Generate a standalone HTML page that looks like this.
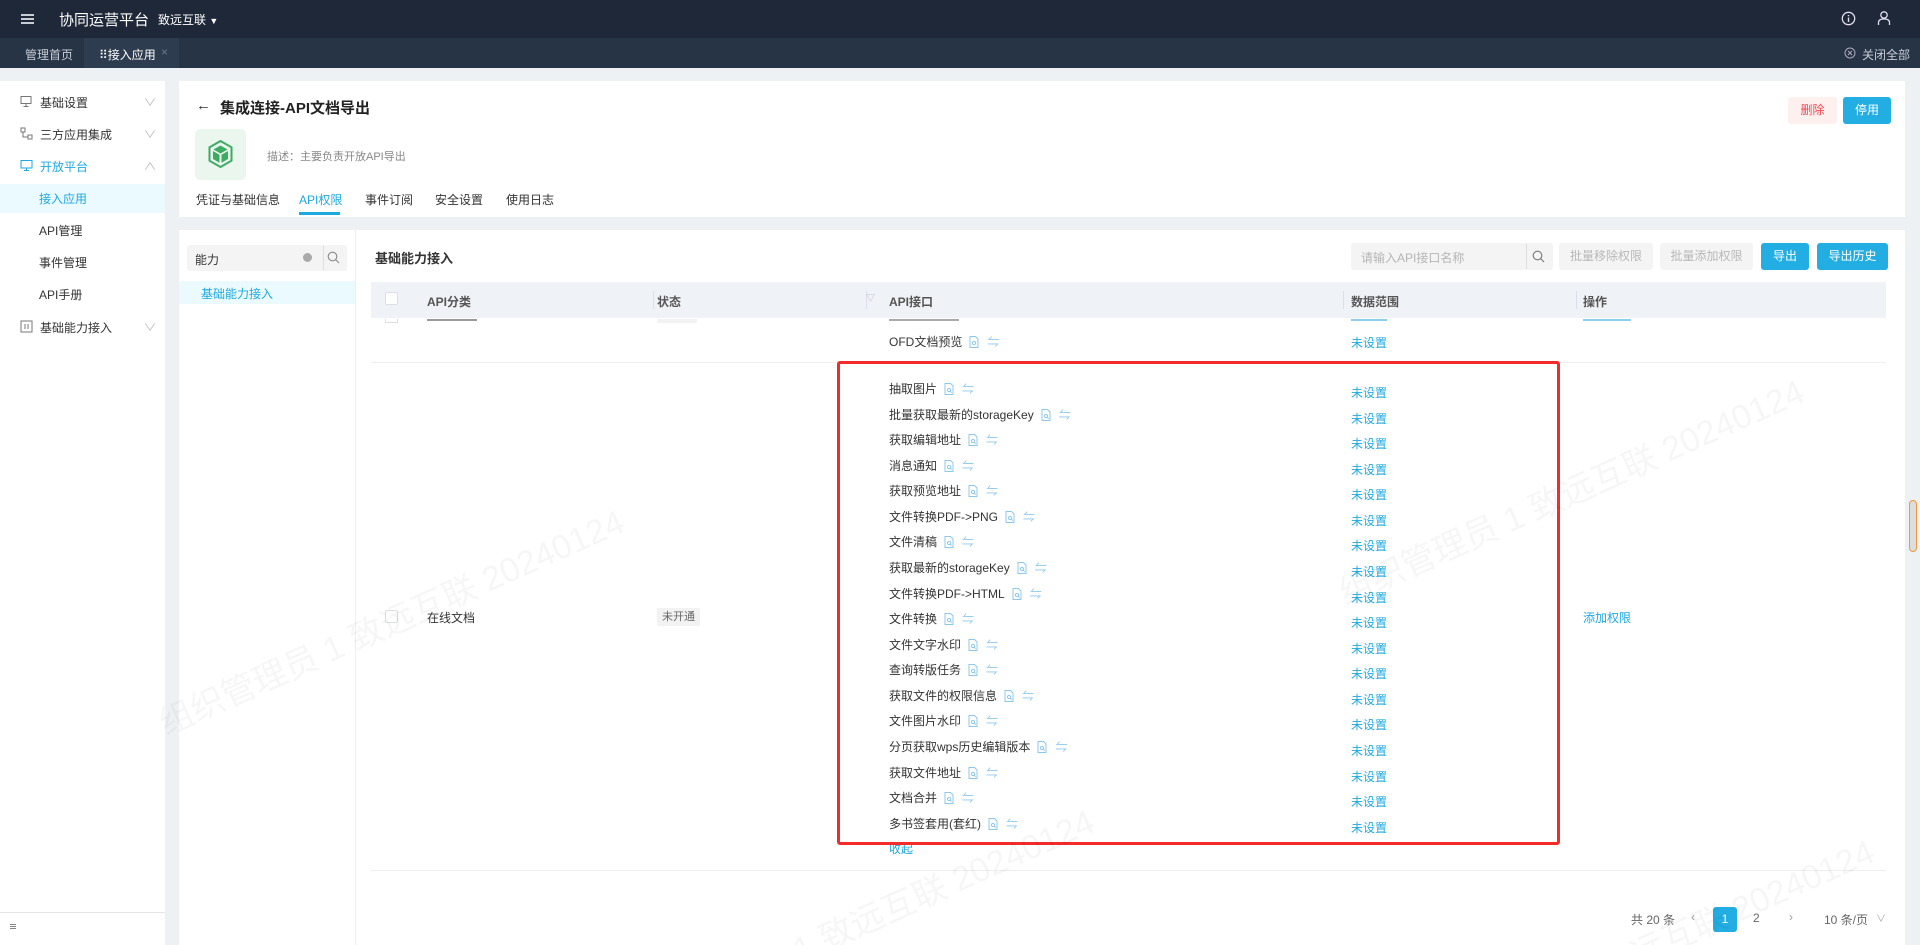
<!DOCTYPE html>
<html><head><meta charset="utf-8"><style>
*{box-sizing:border-box;margin:0;padding:0}
html,body{width:1920px;height:945px;overflow:hidden}
body{background:#eef1f4;font-family:"Liberation Sans","Noto Sans CJK SC",sans-serif;font-size:12px;color:#333;position:relative}
.a{position:absolute;white-space:nowrap}
.blue{color:#1ea9e1}
.btn{position:absolute;border-radius:3px;text-align:center;font-size:12px}
.it{position:absolute;left:889px;font-size:12px;color:#333}
.it svg{vertical-align:-2px;margin-left:7px}
.ns{position:absolute;left:1351px;color:#1ea9e1;font-size:12px}
.wmc{position:absolute;left:0;top:0;width:1920px;height:945px;overflow:hidden;pointer-events:none}
.wm{position:absolute;color:rgba(0,0,0,0.035);font-size:34px;transform:rotate(-24deg);transform-origin:left top;white-space:nowrap}
</style></head><body>
<div class="a" style="left:0;top:0;width:1920px;height:38px;background:#1e2838"></div>
<div class="a" style="left:21px;top:14px;width:13px;height:2px;background:#c8cdd4;box-shadow:0 4px 0 #c8cdd4,0 8px 0 #c8cdd4"></div>
<div class="a" style="left:59px;top:9px;color:#fff;font-size:15px">协同运营平台</div>
<div class="a" style="left:158px;top:11px;color:#fff;font-size:12px">致远互联 <span style="font-size:9px">▼</span></div>
<svg class="a" style="left:1841px;top:11px" width="15" height="15" viewBox="0 0 15 15"><circle cx="7.5" cy="7.5" r="6.2" fill="none" stroke="#dde" stroke-width="1.3"/><path d="M7.5 6.5v4.5M7.5 4v1.3" stroke="#dde" stroke-width="1.4"/></svg>
<svg class="a" style="left:1877px;top:10px" width="14" height="16" viewBox="0 0 14 16"><circle cx="7" cy="5" r="3.2" fill="none" stroke="#dde" stroke-width="1.3"/><path d="M1.5 15v-2.5q0-3.5 5.5-3.5t5.5 3.5V15" fill="none" stroke="#dde" stroke-width="1.3"/></svg>
<div class="a" style="left:0;top:38px;width:1920px;height:30px;background:#263445"></div>
<div class="a" style="left:84px;top:38px;width:95px;height:30px;background:#2e3c4f"></div>
<div class="a" style="left:25px;top:46px;color:#c9ced6;font-size:12px">管理首页</div>
<div class="a" style="left:99px;top:46px;color:#fff;font-size:12px">⠿接入应用</div>
<div class="a" style="left:161px;top:45px;color:#6c7888;font-size:12px">×</div>
<svg class="a" style="left:1844px;top:47px" width="12" height="12" viewBox="0 0 12 12"><circle cx="6" cy="6" r="5" fill="none" stroke="#aab" stroke-width="1"/><path d="M4 4l4 4M8 4l-4 4" stroke="#aab"/></svg>
<div class="a" style="left:1862px;top:46px;color:#c9ced6;font-size:12px">关闭全部</div>
<div class="a" style="left:0;top:81px;width:165px;height:864px;background:#fff"></div>
<div class="a" style="left:0;top:184px;width:165px;height:29px;background:#eafafe"></div>
<svg class="a" style="left:20px;top:95px" width="13" height="13" viewBox="0 0 13 13"><rect x="1" y="1.5" width="10" height="7" fill="none" stroke="#777"/><path d="M6 8.5v3M3.5 11.5h5" stroke="#777"/></svg>
<div class="a" style="left:40px;top:94px;font-size:12px">基础设置</div>
<svg class="a" style="left:20px;top:127px" width="13" height="13" viewBox="0 0 13 13"><rect x="1" y="1" width="4" height="4" fill="none" stroke="#777"/><rect x="8" y="8" width="4" height="4" fill="none" stroke="#777"/><path d="M3 5v5h5" fill="none" stroke="#777"/></svg>
<div class="a" style="left:40px;top:126px;font-size:12px">三方应用集成</div>
<svg class="a" style="left:20px;top:159px" width="13" height="13" viewBox="0 0 13 13"><rect x="1" y="1.5" width="11" height="7.5" fill="none" stroke="#1ea9e1"/><path d="M6.5 9v2.5M4 11.5h5" stroke="#1ea9e1"/></svg>
<div class="a blue" style="left:40px;top:158px;font-size:12px">开放平台</div>
<div class="a blue" style="left:39px;top:190px">接入应用</div>
<div class="a" style="left:39px;top:222px">API管理</div>
<div class="a" style="left:39px;top:254px">事件管理</div>
<div class="a" style="left:39px;top:286px">API手册</div>
<svg class="a" style="left:20px;top:320px" width="13" height="13" viewBox="0 0 13 13"><rect x="1" y="1" width="11" height="11" fill="none" stroke="#777"/><path d="M5 4v5M8 4v5" stroke="#777"/></svg>
<div class="a" style="left:40px;top:319px;font-size:12px">基础能力接入</div>
<div class="a" style="left:145px;top:94px;color:#bbb;font-size:10px;transform:scaleX(1.3)">∨</div>
<div class="a" style="left:145px;top:126px;color:#bbb;font-size:10px;transform:scaleX(1.3)">∨</div>
<div class="a" style="left:145px;top:158px;color:#bbb;font-size:10px;transform:scaleX(1.3)">∧</div>
<div class="a" style="left:145px;top:319px;color:#bbb;font-size:10px;transform:scaleX(1.3)">∨</div>
<div class="a" style="left:0;top:912px;width:165px;height:1px;background:#e4e6ea"></div>
<div class="a" style="left:10px;top:924px;width:6px;height:1px;background:#888;box-shadow:0 2px 0 #888,0 4px 0 #888"></div>
<div class="a" style="left:179px;top:81px;width:1726px;height:136px;background:#fff"></div>
<div class="a" style="left:196px;top:97px;font-size:15px;color:#333">←</div>
<div class="a" style="left:220px;top:97px;font-size:15px;font-weight:bold;color:#222">集成连接-API文档导出</div>
<div class="a" style="left:195px;top:129px;width:51px;height:51px;background:#eaf6ee;border-radius:5px"></div>
<svg class="a" style="left:208px;top:140px" width="25" height="28" viewBox="0 0 25 28"><path d="M12.5 1L23.5 7.3v13.4L12.5 27 1.5 20.7V7.3z" fill="none" stroke="#3dab62" stroke-width="2"/><path d="M12.5 5.5l7 4-7 4-7-4z" fill="#3dab62"/><path d="M5 11l6.5 3.7v8L5 19z M20 11l-6.5 3.7v8L20 19z" fill="#3dab62"/></svg>
<div class="a" style="left:267px;top:148px;color:#888;font-size:11px">描述：主要负责开放API导出</div>
<div class="a" style="left:196px;top:191px;font-size:12px">凭证与基础信息</div>
<div class="a blue" style="left:299px;top:191px;font-size:12px">API权限</div>
<div class="a" style="left:299px;top:212px;width:41px;height:3px;background:#1ea9e1"></div>
<div class="a" style="left:365px;top:191px;font-size:12px">事件订阅</div>
<div class="a" style="left:435px;top:191px;font-size:12px">安全设置</div>
<div class="a" style="left:506px;top:191px;font-size:12px">使用日志</div>
<div class="btn" style="left:1788px;top:97px;width:49px;height:27px;line-height:27px;background:#fff0f0;color:#f0484f">删除</div>
<div class="btn" style="left:1843px;top:97px;width:48px;height:27px;line-height:27px;background:#22ade3;color:#fff">停用</div>
<div class="a" style="left:179px;top:230px;width:1726px;height:715px;background:#fff"></div>
<div class="a" style="left:355px;top:230px;width:1px;height:715px;background:#eceef1"></div>
<div class="a" style="left:187px;top:245px;width:160px;height:26px;background:#f4f4f5;border-radius:3px"></div>
<div class="a" style="left:195px;top:251px;font-size:12px">能力</div>
<div class="a" style="left:303px;top:253px;width:9px;height:9px;border-radius:50%;background:#aaa"></div>
<div class="a" style="left:323px;top:246px;width:1px;height:24px;background:#ddd"></div>
<svg class="a" style="left:327px;top:251px" width="13" height="13" viewBox="0 0 13 13"><circle cx="5.5" cy="5.5" r="4.3" fill="none" stroke="#888" stroke-width="1.1"/><path d="M8.6 8.6l3.4 3.4" stroke="#888" stroke-width="1.1"/></svg>
<div class="a" style="left:179px;top:281px;width:176px;height:23px;background:#eafafe"></div>
<div class="a blue" style="left:201px;top:285px;font-size:12px">基础能力接入</div>
<div class="a" style="left:375px;top:248px;font-size:13px;font-weight:bold;color:#333">基础能力接入</div>
<div class="a" style="left:1351px;top:243px;width:202px;height:27px;background:#f4f4f5;border-radius:3px"></div>
<div class="a" style="left:1361px;top:249px;color:#b5b5b5;font-size:12px">请输入API接口名称</div>
<div class="a" style="left:1526px;top:244px;width:1px;height:25px;background:#ddd"></div>
<svg class="a" style="left:1532px;top:250px" width="13" height="13" viewBox="0 0 13 13"><circle cx="5.5" cy="5.5" r="4.3" fill="none" stroke="#777" stroke-width="1.1"/><path d="M8.6 8.6l3.4 3.4" stroke="#777" stroke-width="1.1"/></svg>
<div class="btn" style="left:1559px;top:243px;width:94px;height:27px;line-height:27px;background:#f4f4f5;color:#b8b8b8">批量移除权限</div>
<div class="btn" style="left:1660px;top:243px;width:93px;height:27px;line-height:27px;background:#f4f4f5;color:#b8b8b8">批量添加权限</div>
<div class="btn" style="left:1761px;top:243px;width:48px;height:27px;line-height:27px;background:#22ade3;color:#fff">导出</div>
<div class="btn" style="left:1817px;top:243px;width:71px;height:27px;line-height:27px;background:#22ade3;color:#fff">导出历史</div>
<div class="a" style="left:385px;top:319px;width:13px;height:4px;border:1px solid #dcdfe6;border-top:none"></div>
<div class="a" style="left:427px;top:319px;width:50px;height:2px;background:#999"></div>
<div class="a" style="left:657px;top:319px;width:40px;height:4px;background:#f2f2f2"></div>
<div class="a" style="left:889px;top:319px;width:70px;height:2px;background:#aaa"></div>
<div class="a" style="left:1351px;top:319px;width:36px;height:2px;background:#8cd0f0"></div>
<div class="a" style="left:1583px;top:319px;width:48px;height:2px;background:#8cd0f0"></div>
<div class="a" style="left:371px;top:282px;width:1515px;height:36px;background:#eff2f6"></div>
<div class="a" style="left:385px;top:292px;width:13px;height:13px;background:#fff;border:1px solid #dcdfe6;border-radius:2px"></div>
<div class="a" style="left:427px;top:293px;font-weight:bold;color:#555">API分类</div>
<div class="a" style="left:653px;top:291px;width:1px;height:18px;background:#dde"></div>
<div class="a" style="left:657px;top:293px;font-weight:bold;color:#555">状态</div>
<div class="a" style="left:866px;top:291px;width:1px;height:18px;background:#dde"></div>
<div class="a" style="left:866px;top:291px;color:#bbb;font-size:9px">▽</div>
<div class="a" style="left:889px;top:293px;font-weight:bold;color:#555">API接口</div>
<div class="a" style="left:1343px;top:291px;width:1px;height:18px;background:#dde"></div>
<div class="a" style="left:1351px;top:293px;font-weight:bold;color:#555">数据范围</div>
<div class="a" style="left:1576px;top:291px;width:1px;height:18px;background:#dde"></div>
<div class="a" style="left:1583px;top:293px;font-weight:bold;color:#555">操作</div>
<div class="a" style="left:889px;top:333px">OFD文档预览<svg width="10" height="12" viewBox="0 0 10 12" style="vertical-align:-2px;margin-left:7px"><path d="M1 .5h5.5l2.5 2.5v8.5H1z" fill="none" stroke="#8cc8ec"/><circle cx="5" cy="7" r="1.6" fill="none" stroke="#8cc8ec"/></svg><span style="color:#8cc8ec;margin-left:8px">⇋</span></div>
<div class="ns" style="top:334px">未设置</div>
<div class="a" style="left:371px;top:362px;width:1515px;height:1px;background:#edeff2"></div>
<div class="a" style="left:385px;top:610px;width:13px;height:13px;background:#fff;border:1px solid #dcdfe6;border-radius:2px"></div>
<div class="a" style="left:427px;top:609px">在线文档</div>
<div class="a" style="left:657px;top:608px;width:43px;height:18px;background:#f2f2f2;border-radius:2px;font-size:11px;color:#666;text-align:center;line-height:18px">未开通</div>
<div class="a blue" style="left:1583px;top:609px">添加权限</div>
<div id="items"></div>
<div class="a blue" style="left:889px;top:840px">收起</div>
<div class="a" style="left:371px;top:870px;width:1515px;height:1px;background:#edeff2"></div>
<div class="a" style="left:837px;top:361px;width:723px;height:484px;border:3px solid #f32b2b;border-radius:3px"></div>
<div class="a" style="left:1631px;top:911px;color:#666">共 20 条</div>
<div class="a" style="left:1691px;top:910px;color:#999">‹</div>
<div class="a" style="left:1713px;top:907px;width:24px;height:25px;background:#22ade3;border-radius:3px;color:#fff;text-align:center;line-height:25px">1</div>
<div class="a" style="left:1753px;top:911px;color:#666">2</div>
<div class="a" style="left:1789px;top:910px;color:#999">›</div>
<div class="a" style="left:1824px;top:911px;color:#666">10 条/页</div>
<div class="a" style="left:1876px;top:910px;color:#aaa;font-size:10px">∨</div>
<div class="a" style="left:1909px;top:500px;width:8px;height:52px;border:1px solid #e89b3a;border-radius:4px;background:#ddd"></div>
<div class="wmc">
<div class="wm" style="left:150px;top:700px">组织管理员 1 致远互联 20240124</div>
<div class="wm" style="left:1330px;top:570px">组织管理员 1 致远互联 20240124</div>
<div class="wm" style="left:620px;top:1000px">组织管理员 1 致远互联 20240124</div>
<div class="wm" style="left:1400px;top:1030px">组织管理员 1 致远互联 20240124</div>
</div>
<script>
var n=["抽取图片","批量获取最新的storageKey","获取编辑地址","消息通知","获取预览地址","文件转换PDF->PNG","文件清稿","获取最新的storageKey","文件转换PDF->HTML","文件转换","文件文字水印","查询转版任务","获取文件的权限信息","文件图片水印","分页获取wps历史编辑版本","获取文件地址","文档合并","多书签套用(套红)"];
var ic='<svg width="10" height="12" viewBox="0 0 10 12"><path d="M1 .5h5.5l2.5 2.5v8.5H1z" fill="none" stroke="#8cc8ec"/><circle cx="5" cy="7" r="1.6" fill="none" stroke="#8cc8ec"/><path d="M6.2 8.2l1.5 1.5" stroke="#8cc8ec"/></svg><span style="color:#8cc8ec;margin-left:8px">⇋</span>';
var h="";for(var i=0;i<n.length;i++){var y=380+i*25.57;h+='<div class="it" style="top:'+y.toFixed(1)+'px">'+n[i].replace(/</g,"&lt;").replace(/>/g,"&gt;")+ic+'</div><div class="ns" style="top:'+(y+4).toFixed(1)+'px">未设置</div>';}
document.getElementById("items").innerHTML=h;
</script>
</body></html>
